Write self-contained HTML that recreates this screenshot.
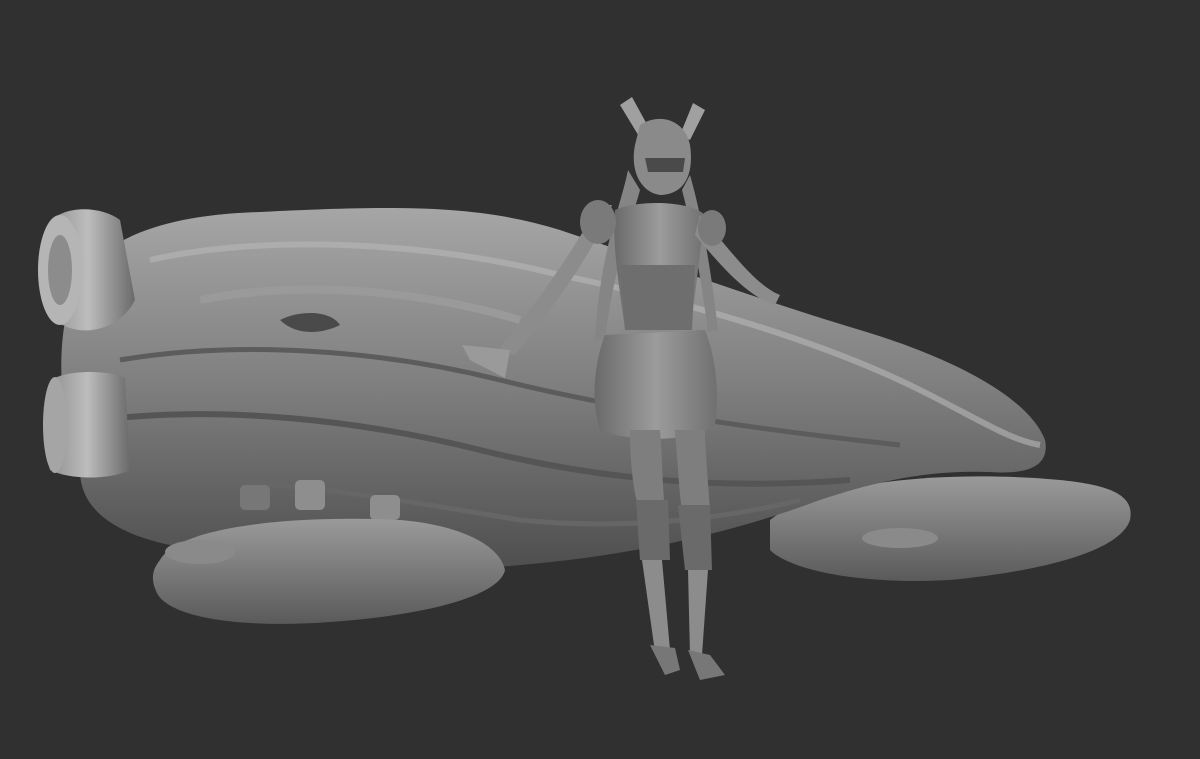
<!DOCTYPE html>
<html><head><meta charset="utf-8"><style>
html,body{margin:0;padding:0;background:#303030;}
svg{display:block}
</style></head><body>
<svg width="1200" height="759" viewBox="0 0 1200 759" xmlns="http://www.w3.org/2000/svg">
<defs>
<linearGradient id="body" x1="0" y1="0" x2="0" y2="1">
<stop offset="0" stop-color="#a6a6a6"/><stop offset="0.5" stop-color="#7e7e7e"/><stop offset="1" stop-color="#4e4e4e"/>
</linearGradient>
<linearGradient id="pod" x1="0" y1="0" x2="0" y2="1">
<stop offset="0" stop-color="#9a9a9a"/><stop offset="1" stop-color="#5a5a5a"/>
</linearGradient>
<linearGradient id="eng" x1="0" y1="0" x2="1" y2="0">
<stop offset="0" stop-color="#8a8a8a"/><stop offset="0.5" stop-color="#bdbdbd"/><stop offset="1" stop-color="#6a6a6a"/>
</linearGradient>
<linearGradient id="fig" x1="0" y1="0" x2="1" y2="0">
<stop offset="0" stop-color="#6a6a6a"/><stop offset="0.5" stop-color="#9c9c9c"/><stop offset="1" stop-color="#707070"/>
</linearGradient>
</defs>
<rect width="1200" height="759" fill="#303030"/>
<!-- right fin -->
<path d="M770 520 C820 480 950 470 1060 480 C1110 485 1135 495 1130 520 C1120 550 1050 570 950 580 C860 585 790 570 770 550 Z" fill="url(#pod)"/>
<ellipse cx="900" cy="538" rx="38" ry="10" fill="#8a8a8a"/>
<!-- main body -->
<path d="M70 300 C90 240 160 215 260 212 C400 205 480 205 560 230 C650 260 760 300 860 330 C960 360 1030 400 1045 440 C1050 465 1030 475 990 472 C930 470 880 480 820 500 C740 530 640 555 520 565 C420 575 280 570 170 545 C100 530 80 500 80 470 C60 420 55 350 70 300 Z" fill="url(#body)"/>
<path d="M150 260 C260 235 420 240 560 275 C680 300 820 340 920 390 C980 420 1010 440 1040 445" fill="none" stroke="#b8b8b8" stroke-width="6" opacity="0.6"/>
<path d="M120 360 C240 340 380 350 500 380 C620 410 760 430 900 445" fill="none" stroke="#5c5c5c" stroke-width="5"/>
<path d="M100 420 C220 405 360 420 480 450 C600 480 720 490 850 480" fill="none" stroke="#555" stroke-width="6"/>
<path d="M130 480 C260 475 400 500 520 520 C620 530 720 520 800 500" fill="none" stroke="#666" stroke-width="5"/>
<path d="M280 320 C300 310 330 310 340 325 C320 335 295 335 280 320 Z" fill="#4a4a4a"/>
<path d="M200 300 C300 280 420 290 520 320" fill="none" stroke="#9a9a9a" stroke-width="8"/>
<!-- engines -->
<path d="M48 225 C60 205 100 205 120 220 L135 300 C120 330 80 340 55 320 C38 290 38 250 48 225 Z" fill="url(#eng)"/>
<ellipse cx="60" cy="270" rx="22" ry="55" fill="#b5b5b5"/>
<ellipse cx="60" cy="270" rx="12" ry="35" fill="#8c8c8c"/>
<path d="M55 378 C70 370 110 370 125 378 L130 470 C110 480 70 480 50 470 C42 440 42 400 55 378 Z" fill="url(#eng)"/>
<ellipse cx="55" cy="425" rx="12" ry="48" fill="#a5a5a5"/>
<!-- struts -->
<rect x="295" y="480" width="30" height="30" rx="5" fill="#8e8e8e"/>
<rect x="370" y="495" width="30" height="25" rx="5" fill="#8e8e8e"/>
<rect x="240" y="485" width="30" height="25" rx="5" fill="#777"/>
<!-- left pod -->
<path d="M160 560 C180 525 300 515 400 520 C460 525 500 545 505 570 C500 595 430 615 330 622 C250 628 175 620 158 595 C150 580 152 570 160 560 Z" fill="url(#pod)"/>
<ellipse cx="200" cy="552" rx="35" ry="12" fill="#8a8a8a"/>
<!-- figure -->
<g>
<path d="M620 105 L632 97 L650 130 L640 138 Z" fill="#a0a0a0"/>
<path d="M705 110 L693 103 L680 135 L690 140 Z" fill="#a0a0a0"/>
<path d="M640 125 C660 112 685 120 690 145 C695 180 680 195 660 195 C640 192 630 170 635 145 Z" fill="#8a8a8a"/>
<path d="M645 158 L685 158 L683 172 L648 172 Z" fill="#4a4a4a"/>
<path d="M628 170 C620 210 600 250 595 340 L605 340 C615 260 632 220 640 190 Z" fill="#858585"/>
<path d="M690 175 C700 210 710 260 718 330 L708 332 C700 270 690 220 682 190 Z" fill="#858585"/>
<path d="M615 210 C635 200 690 200 705 215 C700 250 695 300 690 330 L625 330 C620 290 612 250 615 210 Z" fill="url(#fig)"/>
<path d="M620 265 L695 265 L692 330 L625 330 Z" fill="#6e6e6e"/>
<path d="M612 205 C600 240 560 300 515 355 L498 350 C540 300 580 240 598 205 Z" fill="#8c8c8c"/>
<path d="M700 215 C730 250 755 285 780 295 L775 305 C748 297 720 265 695 235 Z" fill="#8c8c8c"/>
<ellipse cx="598" cy="222" rx="18" ry="22" fill="#7a7a7a"/>
<ellipse cx="712" cy="228" rx="14" ry="18" fill="#7a7a7a"/>
<path d="M462 345 L510 350 L505 378 L470 360 Z" fill="#9a9a9a"/>
<path d="M605 335 C595 360 590 400 600 430 C620 440 690 445 715 425 C720 390 715 355 705 330 Z" fill="url(#fig)"/>
<path d="M630 430 C630 470 635 500 640 510 L665 510 C662 480 662 450 660 430 Z" fill="#7e7e7e"/>
<path d="M675 430 C678 470 680 500 682 510 L710 510 C708 480 705 450 705 430 Z" fill="#7e7e7e"/>
<path d="M636 500 L668 500 L670 560 L640 560 Z" fill="#6a6a6a"/>
<path d="M678 505 L710 505 L712 570 L685 570 Z" fill="#6a6a6a"/>
<path d="M642 560 L662 560 L670 650 L655 652 Z" fill="#8c8c8c"/>
<path d="M688 570 L708 570 L702 655 L690 655 Z" fill="#8c8c8c"/>
<path d="M650 645 L675 648 L680 670 L665 675 Z" fill="#777"/>
<path d="M688 650 L710 655 L725 675 L700 680 Z" fill="#777"/>
</g>
</svg>
</body></html>
